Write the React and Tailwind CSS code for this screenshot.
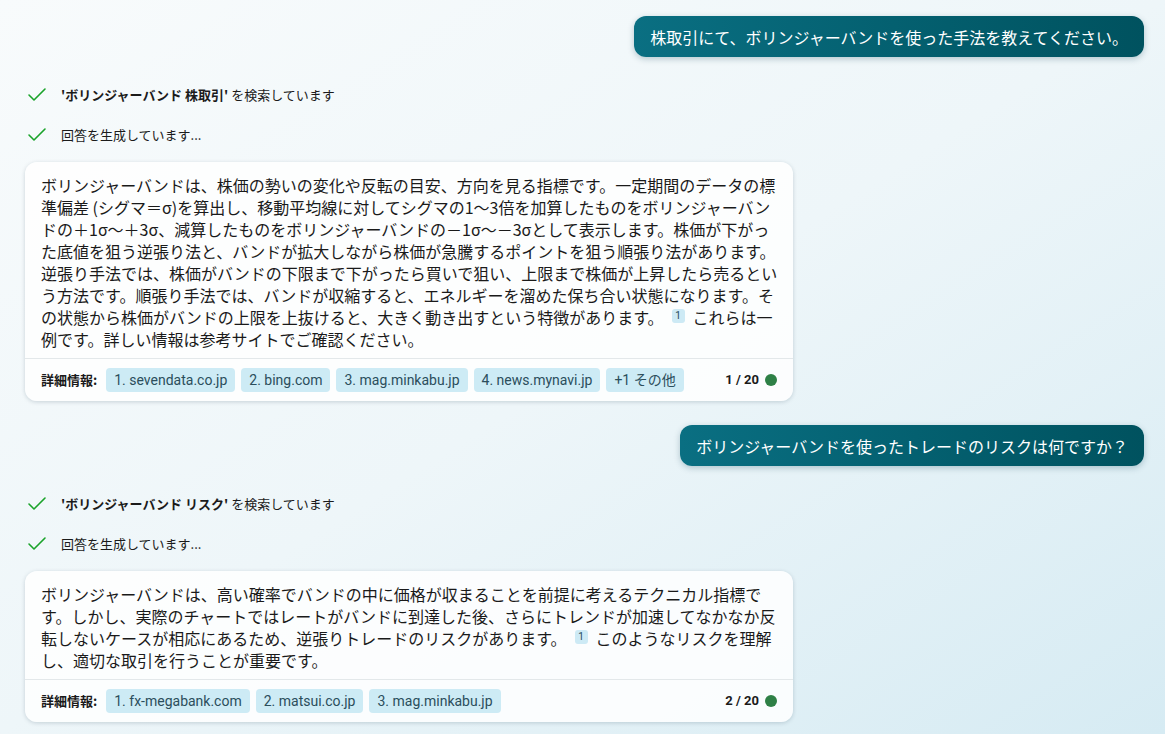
import { Check } from 'lucide-react'

const jp = 'font-["Noto_Sans_CJK_JP",sans-serif]'

function UserBubble({ text }) {
  return (
    <div className="flex justify-end">
      <div className="rounded-xl bg-gradient-to-r from-[#0a6f82] to-[#00525f] px-4 h-[41px] flex items-center text-white text-[16px] shadow-[0_2px_6px_rgba(0,60,80,0.25)]">
        {text}
      </div>
    </div>
  )
}

function Status({ query }) {
  return (
    <div className="mt-[28px] flex flex-col gap-5">
      <div className="flex items-center h-5 gap-3 text-[13px] text-[#1b1b1b]">
        <Check size={24} strokeWidth={1.6} className="text-[#1aa32a]" />
        <span>
          <b>'{query}'</b> を検索しています
        </span>
      </div>
      <div className="flex items-center h-5 gap-3 text-[13px] text-[#1b1b1b]">
        <Check size={24} strokeWidth={1.6} className="text-[#1aa32a]" />
        <span>回答を生成しています...</span>
      </div>
    </div>
  )
}

function Cite() {
  return (
    <sup className="inline-block w-[13px] h-[14px] mx-[8px] rounded-[3px] bg-[#cdeaf5] text-center text-[10px] leading-[14px] text-[#1e4a5a] font-['Roboto',sans-serif]">
      1
    </sup>
  )
}

function Answer({ children, sources, count }) {
  return (
    <div className="mt-[17px] w-[768px] rounded-xl bg-white/85 shadow-[0_1px_4px_rgba(0,40,60,0.18)]">
      <div className="pl-4 pr-3 pt-3 pb-2 text-[16px] leading-[22px] text-[#1a1a1a]">{children}</div>
      <div className="border-t border-[#e3e8ea] px-4 h-[43px] flex items-center gap-[6px]">
        <span className="text-[13px] font-bold text-[#1a1a1a] mr-[3px]">詳細情報:</span>
        {sources.map((s) => (
          <span
            key={s}
            className="h-6 px-2 flex items-center rounded-[4px] bg-[#cdebf5] text-[14px] text-[#2b4e5c] font-['Roboto',_'Noto_Sans_CJK_JP',sans-serif]"
          >
            {s}
          </span>
        ))}
        <span className="ml-auto flex items-center gap-[6px] text-[13px] font-bold text-[#1a1a1a] font-['Roboto',sans-serif]">
          {count}
          <span className="w-3 h-3 rounded-full bg-[#2e8046]" />
        </span>
      </div>
    </div>
  )
}

export default function App() {
  return (
    <div className={`min-h-screen w-full bg-gradient-to-br from-[#f8fbfc] via-[#eef6f9] to-[#d6ebf3] ${jp}`}>
      <div className="pt-4 pb-3 pl-[25px] pr-[21px]">
        <UserBubble text="株取引にて、ボリンジャーバンドを使った手法を教えてください。" />
        <Status query="ボリンジャーバンド 株取引" />
        <Answer
          sources={['1. sevendata.co.jp', '2. bing.com', '3. mag.minkabu.jp', '4. news.mynavi.jp', '+1 その他']}
          count="1 / 20"
        >
          ボリンジャーバンドは、株価の勢いの変化や反転の目安、方向を見る指標です。一定期間のデータの標準偏差 (シグマ＝σ)を算出し、移動平均線に対してシグマの1～3倍を加算したものをボリンジャーバンドの＋1σ～＋3σ、減算したものをボリンジャーバンドの－1σ～－3σとして表示します。株価が下がった底値を狙う逆張り法と、バンドが拡大しながら株価が急騰するポイントを狙う順張り法があります。逆張り手法では、株価がバンドの下限まで下がったら買いで狙い、上限まで株価が上昇したら売るという方法です。順張り手法では、バンドが収縮すると、エネルギーを溜めた保ち合い状態になります。その状態から株価がバンドの上限を上抜けると、大きく動き出すという特徴があります。
          <Cite />
          これらは一例です。詳しい情報は参考サイトでご確認ください。
        </Answer>

        <div className="mt-6">
          <UserBubble text="ボリンジャーバンドを使ったトレードのリスクは何ですか？" />
        </div>
        <Status query="ボリンジャーバンド リスク" />
        <Answer sources={['1. fx-megabank.com', '2. matsui.co.jp', '3. mag.minkabu.jp']} count="2 / 20">
          ボリンジャーバンドは、高い確率でバンドの中に価格が収まることを前提に考えるテクニカル指標です。しかし、実際のチャートではレートがバンドに到達した後、さらにトレンドが加速してなかなか反転しないケースが相応にあるため、逆張りトレードのリスクがあります。
          <Cite />
          このようなリスクを理解し、適切な取引を行うことが重要です。
        </Answer>
      </div>
    </div>
  )
}
